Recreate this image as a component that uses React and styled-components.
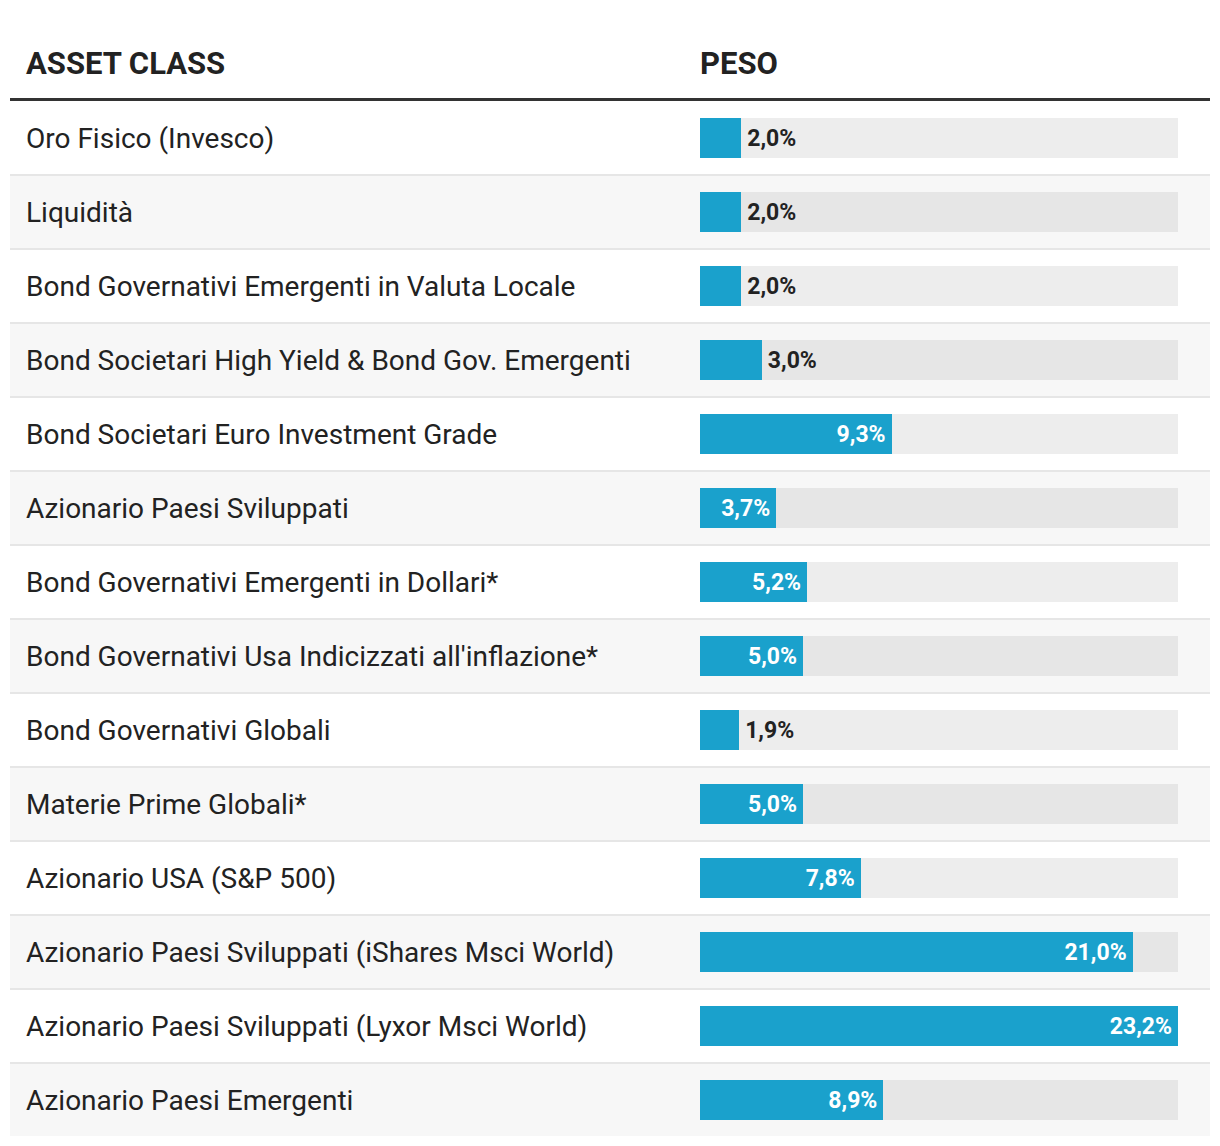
import React from "react";
import styled, { createGlobalStyle } from "styled-components";

const GlobalStyle = createGlobalStyle`
  body {
    margin: 0;
    background: #ffffff;
    font-family: Roboto, "Liberation Sans", Arial, sans-serif;
    color: #222222;
  }
`;

const rows = [
  { name: "Oro Fisico (Invesco)", value: 2.0 },
  { name: "Liquidità", value: 2.0 },
  { name: "Bond Governativi Emergenti in Valuta Locale", value: 2.0 },
  { name: "Bond Societari High Yield & Bond Gov. Emergenti", value: 3.0 },
  { name: "Bond Societari Euro Investment Grade", value: 9.3 },
  { name: "Azionario Paesi Sviluppati", value: 3.7 },
  { name: "Bond Governativi Emergenti in Dollari*", value: 5.2 },
  { name: "Bond Governativi Usa Indicizzati all'inflazione*", value: 5.0 },
  { name: "Bond Governativi Globali", value: 1.9 },
  { name: "Materie Prime Globali*", value: 5.0 },
  { name: "Azionario USA (S&P 500)", value: 7.8 },
  { name: "Azionario Paesi Sviluppati (iShares Msci World)", value: 21.0 },
  { name: "Azionario Paesi Sviluppati (Lyxor Msci World)", value: 23.2 },
  { name: "Azionario Paesi Emergenti", value: 8.9 },
];

const MAX = 23.2;

const formatValue = (v) => v.toFixed(1).replace(".", ",") + "%";

const App = () => {
  return (
    <Page>
      <GlobalStyle />
      <Table>
        <HeaderRow>
          <HeaderCell>ASSET CLASS</HeaderCell>
          <HeaderCell>PESO</HeaderCell>
        </HeaderRow>
        {rows.map((row, index) => {
          const inside = row.value >= 3.5;
          return (
            <Row key={index} $striped={index % 2 === 1} $first={index === 0}>
              <NameCell>{row.name}</NameCell>
              <BarCell>
                <Track $striped={index % 2 === 1}>
                  <Fill style={{ width: `${(row.value / MAX) * 100}%` }}>
                    {inside && <Label $inside>{formatValue(row.value)}</Label>}
                  </Fill>
                  {!inside && <Label>{formatValue(row.value)}</Label>}
                </Track>
              </BarCell>
            </Row>
          );
        })}
      </Table>
    </Page>
  );
};

const Page = styled.div`
  padding: 0 10px 10px;
`;

const Table = styled.div`
  display: flex;
  flex-direction: column;
`;

const HeaderRow = styled.div`
  display: grid;
  grid-template-columns: 674px 1fr;
  border-bottom: 3px solid #333333;
`;

const HeaderCell = styled.div`
  padding: 44px 16px 14px 16px;
  font-size: 31px;
  line-height: 40px;
  font-weight: 700;
  color: #222222;
`;

const Row = styled.div`
  display: grid;
  grid-template-columns: 674px 1fr;
  align-items: center;
  height: 72px;
  padding-top: ${({ $first }) => ($first ? "1px" : "0")};
  background: ${({ $striped }) => ($striped ? "#f7f7f7" : "#ffffff")};
  border-top: ${({ $first }) => ($first ? "none" : "2px solid #e6e6e6")};
`;

const NameCell = styled.div`
  padding-left: 16px;
  font-size: 28px;
  line-height: 36px;
  padding-top: 2px;
  color: #222222;
  white-space: nowrap;
`;

const BarCell = styled.div`
  padding: 0 32px 0 16px;
`;

const Track = styled.div`
  display: flex;
  align-items: center;
  height: 40px;
  background: ${({ $striped }) => ($striped ? "#e6e6e6" : "#ededed")};
`;

const Fill = styled.div`
  height: 100%;
  display: flex;
  align-items: center;
  justify-content: flex-end;
  background: #1aa1cc;
`;

const Label = styled.span`
  font-size: 23px;
  font-weight: 700;
  white-space: nowrap;
  color: ${({ $inside }) => ($inside ? "#ffffff" : "#222222")};
  padding: ${({ $inside }) => ($inside ? "0 6px 0 0" : "0 0 0 6px")};
`;

export default App;
